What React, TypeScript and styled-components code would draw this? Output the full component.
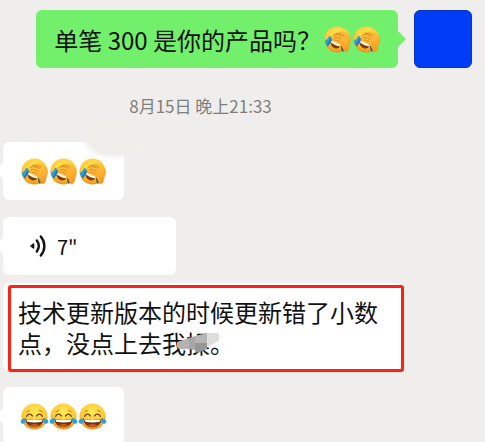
import React from "react";
import styled, { createGlobalStyle } from "styled-components";

const GlobalStyle = createGlobalStyle`
  * { box-sizing: border-box; }
  html, body, #root { height: 100%; }
  body {
    margin: 0;
    overflow: hidden;
    background: #efeeec;
    color: #111;
    font-family: "Noto Sans CJK SC", "Noto Sans", sans-serif;
  }
`;

const Chat = styled.main`
  display: flex;
  flex-direction: column;
  align-items: flex-start;
  gap: 17px;
  min-height: 100%;
  padding: 10px 13px 0 3px;
`;

const OutgoingRow = styled.div`
  display: flex;
  align-self: flex-end;
  gap: 16px;
`;

const Bubble = styled.div<{ $mine?: boolean }>`
  position: relative;
  display: flex;
  align-items: center;
  gap: 3px;
  min-height: 58px;
  padding: 0 18px;
  border-radius: 6px;
  background: ${(p) => (p.$mine ? "#72f06c" : "#fff")};
  font-size: 24px;
  line-height: 31px;

  &::after {
    content: "";
    position: absolute;
    top: 21px;
    ${(p) => (p.$mine ? "right: -8px;" : "left: -8px;")}
    border: 8px solid transparent;
    border-width: 8px 0 8px 8px;
    border-left-color: ${(p) => (p.$mine ? "#72f06c" : "#fff")};
    ${(p) => (p.$mine ? "" : "transform: rotate(180deg);")}
  }
`;

const LongBubble = styled(Bubble)`
  max-width: 85%;
  padding: 13px 15px 12px;

  &::after {
    display: none;
  }
`;

const VoiceBubble = styled(Bubble).attrs({ as: "button", type: "button" })`
  width: 173px;
  padding: 0 26px;
  gap: 8px;
  border: 0;
  margin-bottom: -9px;
  color: #111;
  font-family: inherit;
  font-size: 20px;
  text-align: left;
`;

const Message = styled.p`
  margin: 0;
`;

const EmojiRow = styled.span`
  display: flex;
  gap: 2px;
`;

const Avatar = styled.div`
  flex: none;
  width: 58px;
  height: 58px;
  border: 1px solid #0a35c4;
  border-radius: 6px;
  background: #003cf5;
`;

const Timestamp = styled.time`
  align-self: stretch;
  margin: 8px 74px 7px 0;
  color: #7f7e7a;
  font-size: 17px;
  line-height: 25px;
  text-align: center;
`;

const Highlight = styled.span`
  position: absolute;
  inset: 2px -2px -2px 5px;
  border: 3px solid #ff2113;
  border-radius: 3px;
`;

const MosaicAnchor = styled.span`
  position: relative;
`;

const Mosaic = styled.svg`
  position: absolute;
  left: -10px;
  top: 7px;
`;

const Haze = styled.span`
  position: absolute;
  z-index: 1;
  top: -24px;
  right: -22px;
  width: 66px;
  height: 42px;
  background: radial-gradient(closest-side, #efedea 70%, rgba(239, 237, 234, 0));
`;

const FaceGradient = ({ id }: { id: string }) => (
  <radialGradient id={id} cx="0.5" cy="0.32" r="0.68">
    <stop offset="0" stopColor="#ffe857" />
    <stop offset="0.65" stopColor="#ffc934" />
    <stop offset="1" stopColor="#ee8e16" />
  </radialGradient>
);

function Facepalm() {
  const id = React.useId();
  return (
    <svg width="27" height="27" viewBox="0 0 27 27" role="img" aria-label="捂脸">
      <defs>
        <FaceGradient id={id} />
        <linearGradient id={id + "h"} x1="0.2" y1="0" x2="0.7" y2="1">
          <stop offset="0" stopColor="#ffc844" />
          <stop offset="0.6" stopColor="#ffb02e" />
          <stop offset="1" stopColor="#f39a20" />
        </linearGradient>
      </defs>
      <circle cx="13.5" cy="13.5" r="13" fill={`url(#${id})`} />
      <path d="M6.5 15.500c3.500.2 7.500 1.700 10.300 4-.7 2.400-3.400 3.300-6 2.700C8.200 21.600 6.200 18.600 6.500 15.500Z" fill="#7d3a10" />
      <path d="M7.300 14.800c3.500.2 7 1.700 9.500 3.900l-.6 1.700c-2.900-.4-6.500-1.800-9-3.700Z" fill="#fff5df" />
      <path d="M5.200 9.700 9.200 12 4 20.500C2 18.800.9 16.600.8 14.700c2-.5 3.500-2.400 4.400-5Z" fill="#2b9fdc" />
      <path d="m7.300 11 1.900 1L4 20.500l-1.200-1.300Z" fill="#1b7db8" />
      <path d="M17 19.500 21 24.500l-2.300 1.300c-1.300-1.700-1.800-3.800-1.700-6.300Z" fill="#31566b" />
      <path d="M8 10.700C9 8 12 6.200 15 6c5-.4 9.800 2 11.300 6.500.6 2.500-.5 5.300-1.300 7.500-.1 3-1 5.500-3 6-1.800.1-2.600-1.700-3.200-4-.6-2.300-1.900-3.600-3.900-4.400-2.500-1-4.800-1.800-6.900-3-.8-.6-.1-1.500.9-1.200l2 .5-3.500-1.600c-.8-.5-.3-1.400.6-1.600Z" fill={`url(#${id}h)`} stroke="#e79a29" strokeWidth="0.4" />
      <path d="M9.500 9.300c2.700-1.200 5.500-.8 8.300 1M12 7.700c2.600-.7 5.300 0 7.700 1.700M10.300 11.500c2.400-.2 4.500.4 6.500 1.500M11.300 14c1.500.1 2.900.6 4.200 1.400" fill="none" stroke="#c37a1c" strokeWidth="0.7" strokeLinecap="round" />
    </svg>
  );
}

function Joy() {
  const id = React.useId();
  return (
    <svg width="27" height="27" viewBox="0 0 27 27" overflow="visible" role="img" aria-label="笑哭">
      <defs>
        <FaceGradient id={id} />
      </defs>
      <circle cx="13.500" cy="13.500" r="13" fill={`url(#${id})`} />
      <path d="M6 8.700 8.500 7.300M21 8.700l-2.500-1.400" stroke="#b7791c" strokeWidth="1" strokeLinecap="round" />
      <path d="M5.700 13.300c1.300-2.700 4-3 5.600-.4M15.700 12.900c1.600-2.600 4.300-2.300 5.600.4" fill="none" stroke="#70420f" strokeWidth="1.400" strokeLinecap="round" />
      <path d="M4.600 16c5 1.200 12.800 1.200 17.800 0 .2 4.500-3.600 8.300-8.900 8.300S4.400 20.500 4.600 16Z" fill="#753109" />
      <path d="M5.400 16.400c5 .9 11.200.9 16.200 0-.2 1-.4 1.700-.9 2.400-4.700 1-9.700 1-14.400 0-.5-.7-.7-1.400-.9-2.400Z" fill="#fff" />
      <path d="M8.500 22.500c2.500-2 7.500-2 10 0-2.700 2.300-7.300 2.300-10 0Z" fill="#bd5a1f" />
      <path d="M4.900 14.800c.3 3.300-.4 5.800-2.800 6C.2 20.900-.9 19-.1 17.500c.7-1.400 2.900-1.400 5-2.700ZM22.100 14.800c-.3 3.300.4 5.800 2.800 6 1.900.1 3-1.800 2.200-3.300-.7-1.400-2.900-1.400-5-2.700Z" fill="#2a9fdd" />
    </svg>
  );
}

function VoiceIcon() {
  return (
    <svg width="20" height="24" viewBox="0 0 20 24" fill="none" stroke="#111" strokeWidth="2.400" strokeLinecap="round" aria-hidden="true">
      <path d="M4.500 10v4L2 12Z" fill="#111" strokeWidth="1.600" strokeLinejoin="round" />
      <path d="M7.800 6.500c2.500 3.400 2.500 7.600 0 11M11.800 2.500c4.800 5.800 4.800 13.200 0 19" />
    </svg>
  );
}

export default function App() {
  return (
    <>
      <GlobalStyle />
      <Chat>
        <OutgoingRow>
          <Bubble $mine>
            <Message>单笔 300 是你的产品吗？</Message>
            <EmojiRow>
              <Facepalm />
              <Facepalm />
            </EmojiRow>
          </Bubble>
          <Avatar />
        </OutgoingRow>

        <Timestamp>8月15日 晚上21:33</Timestamp>

        <Bubble>
          <EmojiRow>
            <Facepalm />
            <Facepalm />
            <Facepalm />
          </EmojiRow>
          <Haze />
        </Bubble>

        <VoiceBubble>
          <VoiceIcon />
          <span>7"</span>
        </VoiceBubble>

        <LongBubble>
          <Message>
            技术更新版本的时候更新错了小数点，没点上去我
            <MosaicAnchor>
              <Mosaic width="44" height="22" viewBox="0 0 44 22" aria-hidden="true">
                <path d="M1 10 13 6v11H3l-2-2Z" fill="#b3b3b3" />
                <path d="M13 6 19 4v14l-6-1Z" fill="#a6a6a6" />
                <path d="M19 4 31 1v10H19Z" fill="#b5b5b5" />
                <path d="M19 11h12v6l-10 4-2-2Z" fill="#969696" />
                <path d="M31 1h12v8l-12 6Z" fill="#dedede" />
              </Mosaic>
            </MosaicAnchor>
            操。
          </Message>
          <Highlight />
        </LongBubble>

        <Bubble>
          <EmojiRow>
            <Joy />
            <Joy />
            <Joy />
          </EmojiRow>
        </Bubble>
      </Chat>
    </>
  );
}
